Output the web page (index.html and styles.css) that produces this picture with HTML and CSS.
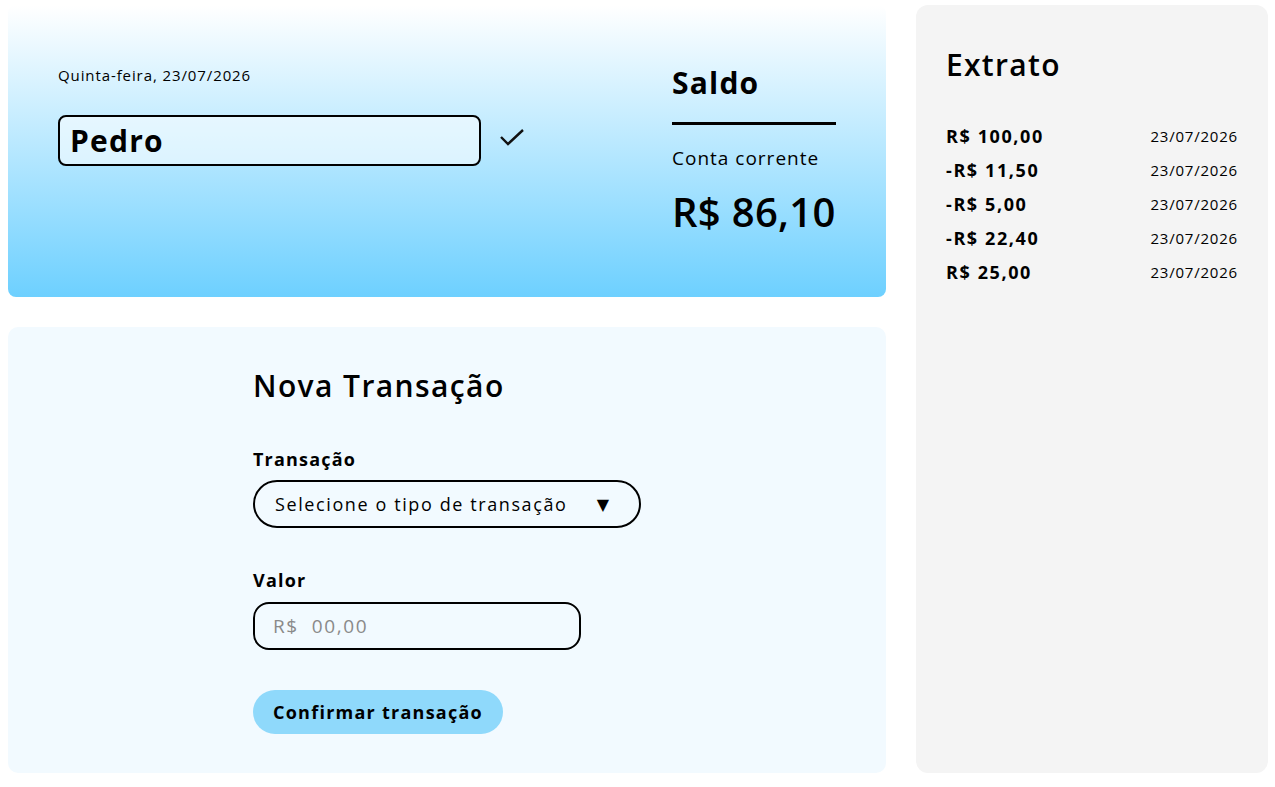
FILE: index.html
```html
<!DOCTYPE html>
<html lang="pt-BR">
	<head>
		<meta charset="utf-8">
		<title>Banco</title>
		<link rel="stylesheet" href="styles.css">
	</head>
	<body>
		<div class="page">
			<div class="main">
				<section class="header">
					<div class="user">
						<p class="date">Quinta-feira, 23/07/2026</p>
						<div class="name-row">
							<input class="name" type="text" value="Pedro">
							<svg class="check" width="26" height="20" viewBox="0 0 26 20">
								<path d="M2 9 L9 16 L24 2" fill="none" stroke="#111" stroke-width="2.4"/>
							</svg>
						</div>
					</div>
					<div class="balance">
						<h2>Saldo</h2>
						<hr>
						<p class="account">Conta corrente</p>
						<p class="amount">R$ 86,10</p>
					</div>
				</section>
				<section class="form-card">
					<form class="form">
						<h2>Nova Transação</h2>
						<label>Transação</label>
						<div class="select">
							<span>Selecione o tipo de transação</span>
							<span class="arrow">▼</span>
						</div>
						<label>Valor</label>
						<input class="value" type="text" placeholder="R$  00,00">
						<button type="button">Confirmar transação</button>
					</form>
				</section>
			</div>
			<aside class="extract">
				<h2>Extrato</h2>
				<ul>
					<li><b>R$ 100,00</b><span>23/07/2026</span></li>
					<li><b>-R$ 11,50</b><span>23/07/2026</span></li>
					<li><b>-R$ 5,00</b><span>23/07/2026</span></li>
					<li><b>-R$ 22,40</b><span>23/07/2026</span></li>
					<li><b>R$ 25,00</b><span>23/07/2026</span></li>
				</ul>
			</aside>
		</div>
	</body>
</html>
```

FILE: styles.css
```css
*{
	margin: 0;
	padding: 0;
	box-sizing: border-box;
}
body{
	font-family: "Open Sans", "DejaVu Sans", sans-serif;
	color: #000;
	background: #fff;
}
.page{
	display: grid;
	grid-template-columns: 878px 352px;
	gap: 30px;
	padding: 5px 7px 0 8px;
	height: 773px;
}
.main{
	display: flex;
	flex-direction: column;
	gap: 30px;
}

/* topo com saldo */
.header{
	height: 292px;
	border-radius: 8px;
	background: linear-gradient(#ffffff, #6dd0ff);
	display: flex;
	justify-content: space-between;
	padding: 0 50px 0 50px;
}
.user{
	padding-top: 60px;
}
.date{
	font-size: 15px;
	letter-spacing: 0.9px;
	height: 20px;
	line-height: 20px;
}
.name-row{
	display: flex;
	align-items: center;
	gap: 18px;
	margin-top: 30px;
}
.name{
	width: 423px;
	height: 51px;
	border: 2px solid #000;
	border-radius: 8px;
	background: rgba(255,255,255,0.55);
	font-family: inherit;
	font-size: 30px;
	font-weight: 700;
	letter-spacing: 1.2px;
	padding: 0 10px;
	outline: none;
}
.check{
	margin-top: -6px;
}
.balance{
	width: 164px;
	padding-top: 58px;
}
.balance h2{
	font-size: 30px;
	font-weight: 700;
	letter-spacing: 1.2px;
	line-height: 40px;
}
.balance hr{
	border: none;
	border-top: 3px solid #000;
	margin-top: 19px;
}
.account{
	font-size: 19px;
	letter-spacing: 1px;
	margin-top: 20px;
	line-height: 26px;
}
.amount{
	font-size: 40px;
	font-weight: 600;
	letter-spacing: 0.3px;
	margin-top: 17px;
	line-height: 48px;
}

/* nova transacao */
.form-card{
	flex: 1;
	background: #f2faff;
	border-radius: 10px;
	padding: 38px 0 0 245px;
}
.form{
	display: flex;
	flex-direction: column;
	align-items: flex-start;
}
.form h2{
	font-size: 30px;
	font-weight: 600;
	letter-spacing: 1.4px;
	line-height: 42px;
}
.form label{
	font-size: 18px;
	font-weight: 700;
	letter-spacing: 1.2px;
	margin-top: 39px;
	line-height: 26px;
}
.select{
	width: 388px;
	height: 48px;
	border: 2px solid #000;
	border-radius: 24px;
	display: flex;
	align-items: center;
	justify-content: space-between;
	padding: 0 30px 0 20px;
	font-size: 18px;
	letter-spacing: 1.6px;
	margin-top: 8px;
}
.arrow{
	font-size: 16px;
	letter-spacing: 0;
}
.value{
	width: 328px;
	height: 48px;
	border: 2px solid #000;
	border-radius: 16px;
	background: transparent;
	font-family: inherit;
	font-size: 19px;
	letter-spacing: 1.6px;
	padding: 0 18px;
	margin-top: 9px;
	outline: none;
}
.value::placeholder{
	color: #8a8a8a;
}
button{
	margin-top: 40px;
	width: 250px;
	height: 44px;
	border: none;
	border-radius: 22px;
	background: #8fd9fb;
	font-family: inherit;
	font-size: 18px;
	font-weight: 700;
	letter-spacing: 1.25px;
	color: #000;
}

/* extrato */
.extract{
	background: #f4f4f4;
	border-radius: 12px;
	padding: 40px 30px 0 30px;
}
.extract h2{
	font-size: 30px;
	font-weight: 600;
	letter-spacing: 1.3px;
	line-height: 40px;
}
.extract ul{
	list-style: none;
	margin-top: 34px;
}
.extract li{
	display: flex;
	justify-content: space-between;
	align-items: center;
	height: 34px;
}
.extract li b{
	font-size: 18px;
	font-weight: 700;
	letter-spacing: 1.6px;
}
.extract li span{
	font-size: 15px;
	letter-spacing: 0.8px;
}
```
